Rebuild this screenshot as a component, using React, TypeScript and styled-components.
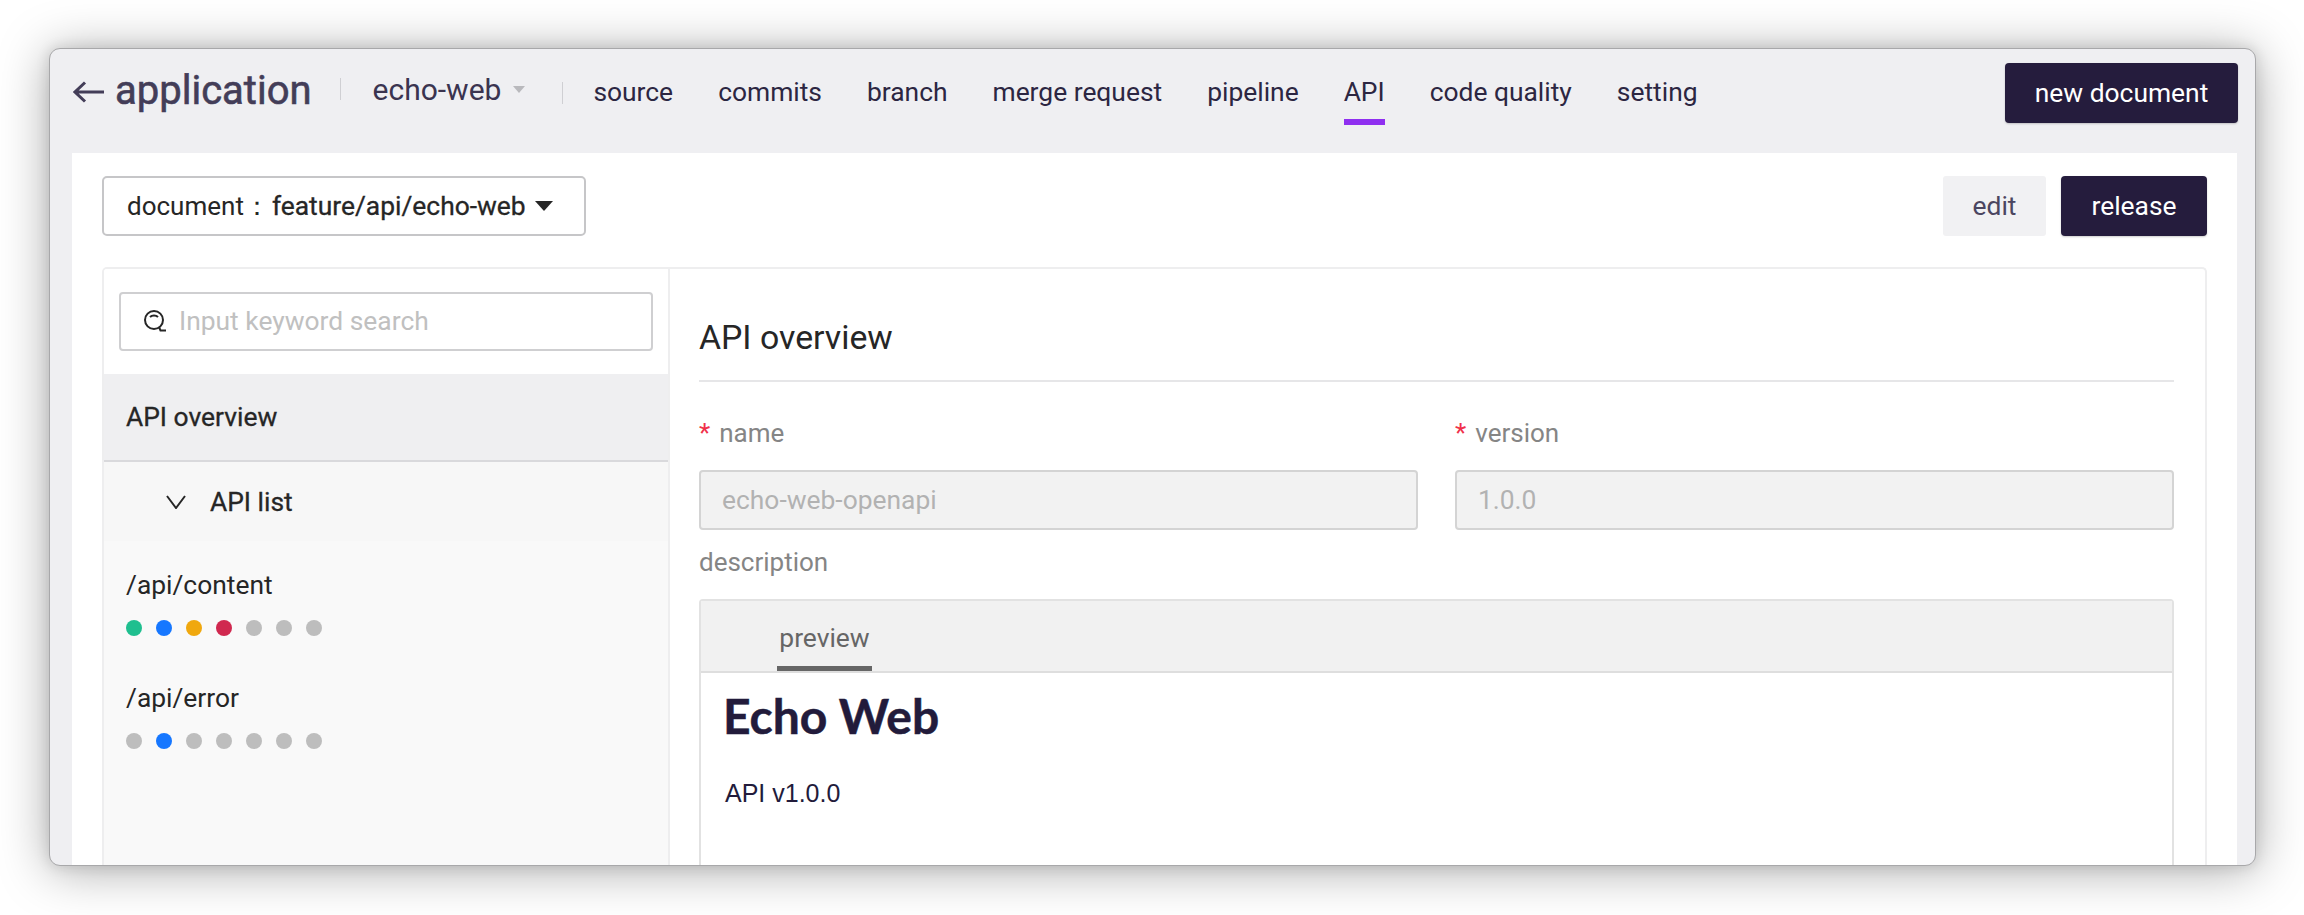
import React from "react";
import styled, { createGlobalStyle } from "styled-components";

const Global = createGlobalStyle`
  html, body { margin: 0; padding: 0; background: #fff; height: 915px; overflow: hidden; }
  * { box-sizing: border-box; }
  #root { font-family: Roboto, "Liberation Sans", sans-serif; }
`;

const Page = styled.div`
  width: 2304px;
  height: 915px;
  padding: 48px 48px 49px 49px;
  background: #fff;
`;
const Window = styled.div`
  height: 818px;
  display: flex;
  flex-direction: column;
  background: #efeff2;
  border: 1px solid #a8a8aa;
  border-radius: 11px;
  overflow: hidden;
  box-shadow: 0 4px 50px rgba(0, 0, 0, 0.34), 0 0 14px rgba(0, 0, 0, 0.12);
`;
const Header = styled.header`
  height: 104px;
  flex: none;
  display: flex;
  align-items: flex-start;
  padding: 0 17px 0 23px;
  color: #28223f;
`;
const Back = styled.svg`
  width: 32px;
  height: 22px;
  margin-top: 32px;
  flex: none;
`;
const AppTitle = styled.span`
  margin: 20px 0 0 10px;
  font-size: 40px;
  font-weight: 400;
  line-height: 44px;
  color: #433d58;
  -webkit-text-stroke: 0.6px #433d58;
`;
const Divider = styled.span<{ $dy: number; $dx: number }>`
  width: 1px;
  height: 22px;
  margin: ${(p) => p.$dy}px 0 0 ${(p) => p.$dx}px;
  background: #cfcfd3;
  flex: none;
`;
const RepoName = styled.span`
  margin: 24px 0 0 32px;
  font-size: 30px;
  line-height: 34px;
  color: #3a3450;
`;
const SmallCaret = styled.span`
  width: 0;
  height: 0;
  margin: 37px 0 0 12px;
  border-left: 6px solid transparent;
  border-right: 6px solid transparent;
  border-top: 7px solid #b9b9bd;
`;
const Nav = styled.nav`
  display: flex;
  gap: 45px;
  margin-left: 30px;
  flex: 1;
`;
const NavItem = styled.a<{ $active?: boolean }>`
  display: block;
  height: 76px;
  padding-top: 26px;
  font-size: 26.4px;
  line-height: 34px;
  color: #2c2642;
  border-bottom: 6px solid ${(p) => (p.$active ? "#8f2ff0" : "transparent")};
`;
const DarkButton = styled.button`
  border: 0;
  border-radius: 4px;
  background: #251c3d;
  color: #fff;
  font: 400 26.4px Roboto, sans-serif;
  box-shadow: 0 1px 2px rgba(0, 0, 0, 0.2);
`;
const NewDoc = styled(DarkButton)`
  width: 233px;
  height: 60px;
  margin-top: 14px;
`;
const Content = styled.main`
  flex: 1;
  min-height: 0;
  margin: 0 18px 0 22px;
  background: #fff;
  display: flex;
  flex-direction: column;
  padding: 23px 30px 0 30px;
`;
const Toolbar = styled.div`
  display: flex;
  align-items: center;
  gap: 15px;
  flex: none;
`;
const DocSelect = styled.div`
  width: 484px;
  height: 60px;
  display: flex;
  align-items: center;
  padding-left: 23px;
  border: 2px solid #c6c6c8;
  border-radius: 5px;
  font-size: 26px;
  color: #262626;
  margin-right: auto;
`;
const Branch = styled.span`
  margin-left: 2px;
  font-size: 26.4px;
  -webkit-text-stroke: 0.3px #262626;
`;
const DocCaret = styled.span`
  width: 0;
  height: 0;
  margin-left: 9px;
  border-left: 9px solid transparent;
  border-right: 9px solid transparent;
  border-top: 10px solid #262626;
`;
const EditButton = styled.button`
  width: 103px;
  height: 60px;
  border: 0;
  border-radius: 3px;
  background: #f1f1f3;
  color: #4b4660;
  font: 400 26.4px Roboto, sans-serif;
`;
const ReleaseButton = styled(DarkButton)`
  width: 146px;
  height: 60px;
`;
const Panel = styled.section`
  flex: 1;
  min-height: 0;
  margin-top: 31px;
  display: flex;
  border: 2px solid #eeeeef;
  border-bottom: 0;
  border-radius: 5px 5px 0 0;
  overflow: hidden;
`;
const Sidebar = styled.aside`
  width: 566px;
  flex: none;
  background: #f9f9f9;
  border-right: 2px solid #eeeeef;
`;
const SearchWrap = styled.div`
  background: #fff;
  padding: 23px 15px 23px 15px;
`;
const SearchBox = styled.div`
  height: 59px;
  display: flex;
  align-items: center;
  padding-left: 22px;
  gap: 12px;
  border: 2px solid #cfcfd1;
  border-radius: 4px;
  background: #fff;
  font-size: 26.4px;
  line-height: 32px;
  padding-bottom: 2px;
  color: #c0c0c0;
`;
const OverviewRow = styled.div`
  height: 88px;
  display: flex;
  align-items: center;
  padding-left: 22px;
  background: #efeff1;
  border-bottom: 2px solid #d9d9dc;
  font-size: 26.4px;
  color: #262626;
  -webkit-text-stroke: 0.3px #262626;
`;
const ListRow = styled.div`
  height: 79px;
  display: flex;
  align-items: center;
  padding-left: 62px;
  gap: 24px;
  background: #f7f7f7;
  font-size: 26.4px;
  color: #262626;
  -webkit-text-stroke: 0.3px #262626;
`;
const Endpoint = styled.div`
  padding: 29px 0 18px 22px;
`;
const EndpointPath = styled.div`
  font-size: 26.4px;
  line-height: 30px;
  color: #262626;
  margin-bottom: 20px;
`;
const Dots = styled.div`
  display: flex;
  gap: 14px;
`;
const Dot = styled.span<{ $c: string }>`
  width: 16px;
  height: 16px;
  border-radius: 50%;
  background: ${(p) => p.$c};
`;
const Main = styled.div`
  flex: 1;
  min-width: 0;
  padding: 49px 31px 0 29px;
`;
const Title = styled.h2`
  margin: 0;
  height: 64px;
  font-size: 33.8px;
  line-height: 40px;
  font-weight: 400;
  color: #262626;
  border-bottom: 2px solid #e6e6e8;
`;
const FieldGrid = styled.div`
  display: grid;
  grid-template-columns: 719px 1fr;
  column-gap: 37px;
  margin-top: 34px;
`;
const Label = styled.label`
  display: block;
  font-size: 26px;
  line-height: 34px;
  color: #858585;
`;
const Star = styled.span`
  color: #f0304a;
  margin-right: 9px;
`;
const FieldValue = styled.div`
  height: 60px;
  margin-top: 20px;
  display: flex;
  align-items: center;
  padding-left: 21px;
  background: #f2f2f2;
  border: 2px solid #d4d4d4;
  border-radius: 4px;
  font-size: 26.4px;
  color: #b2b2b2;
`;
const DescLabel = styled(Label)`
  margin-top: 15px;
`;
const Editor = styled.div`
  margin-top: 20px;
  height: 400px;
  border: 2px solid #e2e2e2;
  border-radius: 4px 4px 0 0;
`;
const EditorTabs = styled.div`
  height: 72px;
  background: #f1f1f1;
  border-bottom: 2px solid #dedede;
  padding-left: 76px;
`;
const PreviewTab = styled.div`
  width: 95px;
  height: 70px;
  padding-top: 21px;
  text-align: center;
  font-size: 26.4px;
  line-height: 32px;
  color: #666;
  border-bottom: 5px solid #666;
`;
const Preview = styled.div`
  padding: 13px 22px;
`;
const PreviewTitle = styled.h1`
  margin: 0;
  font-family: Lato, sans-serif;
  font-size: 48px;
  line-height: 60px;
  font-weight: 700;
  color: #221b3b;
  -webkit-text-stroke: 0.5px #221b3b;
`;
const PreviewText = styled.p`
  margin: 32px 0 0 2px;
  font-family: "Liberation Sans", Arial, sans-serif;
  font-size: 25px;
  line-height: 30px;
  color: #221b3b;
`;

const g = "#bdbdbd";
const endpoints = [
  { path: "/api/content", dots: ["#1fbf8f", "#1677ff", "#f0a80e", "#d0284f", g, g, g] },
  { path: "/api/error", dots: [g, "#1677ff", g, g, g, g, g] },
];
const tabs = ["source", "commits", "branch", "merge request", "pipeline", "API", "code quality", "setting"];

export default function App() {
  return (
    <Page>
      <Global />
      <Window>
        <Header>
          <Back viewBox="0 0 32 22" fill="none" stroke="#433d58" strokeWidth="3">
            <path d="M31 11H2M12 1.5 2 11l10 9.5" />
          </Back>
          <AppTitle>application</AppTitle>
          <Divider $dy={29} $dx={28} />
          <RepoName>echo-web</RepoName>
          <SmallCaret />
          <Divider $dy={33} $dx={37} />
          <Nav>
            {tabs.map((t) => (
              <NavItem key={t} $active={t === "API"}>{t}</NavItem>
            ))}
          </Nav>
          <NewDoc>new document</NewDoc>
        </Header>
        <Content>
          <Toolbar>
            <DocSelect>
              document：<Branch>feature/api/echo-web</Branch>
              <DocCaret />
            </DocSelect>
            <EditButton>edit</EditButton>
            <ReleaseButton>release</ReleaseButton>
          </Toolbar>
          <Panel>
            <Sidebar>
              <SearchWrap>
                <SearchBox>
                  <svg width="24" height="22" viewBox="0 0 24 22" fill="none" stroke="#262626" strokeWidth="2">
                    <circle cx="11" cy="10" r="9" />
                    <path d="M7 7c2-2 6-2 8 0M16 17l1.5 3.5H23" />
                  </svg>
                  Input keyword search
                </SearchBox>
              </SearchWrap>
              <OverviewRow>API overview</OverviewRow>
              <ListRow>
                <svg width="20" height="14" viewBox="0 0 20 14" fill="none" stroke="#262626" strokeWidth="2">
                  <path d="M1 1l9 12 9-12" />
                </svg>
                API list
              </ListRow>
              {endpoints.map((e) => (
                <Endpoint key={e.path}>
                  <EndpointPath>{e.path}</EndpointPath>
                  <Dots>
                    {e.dots.map((c, i) => (
                      <Dot key={i} $c={c} />
                    ))}
                  </Dots>
                </Endpoint>
              ))}
            </Sidebar>
            <Main>
              <Title>API overview</Title>
              <FieldGrid>
                <div>
                  <Label><Star>*</Star>name</Label>
                  <FieldValue>echo-web-openapi</FieldValue>
                </div>
                <div>
                  <Label><Star>*</Star>version</Label>
                  <FieldValue>1.0.0</FieldValue>
                </div>
              </FieldGrid>
              <DescLabel>description</DescLabel>
              <Editor>
                <EditorTabs>
                  <PreviewTab>preview</PreviewTab>
                </EditorTabs>
                <Preview>
                  <PreviewTitle>Echo Web</PreviewTitle>
                  <PreviewText>API v1.0.0</PreviewText>
                </Preview>
              </Editor>
            </Main>
          </Panel>
        </Content>
      </Window>
    </Page>
  );
}
